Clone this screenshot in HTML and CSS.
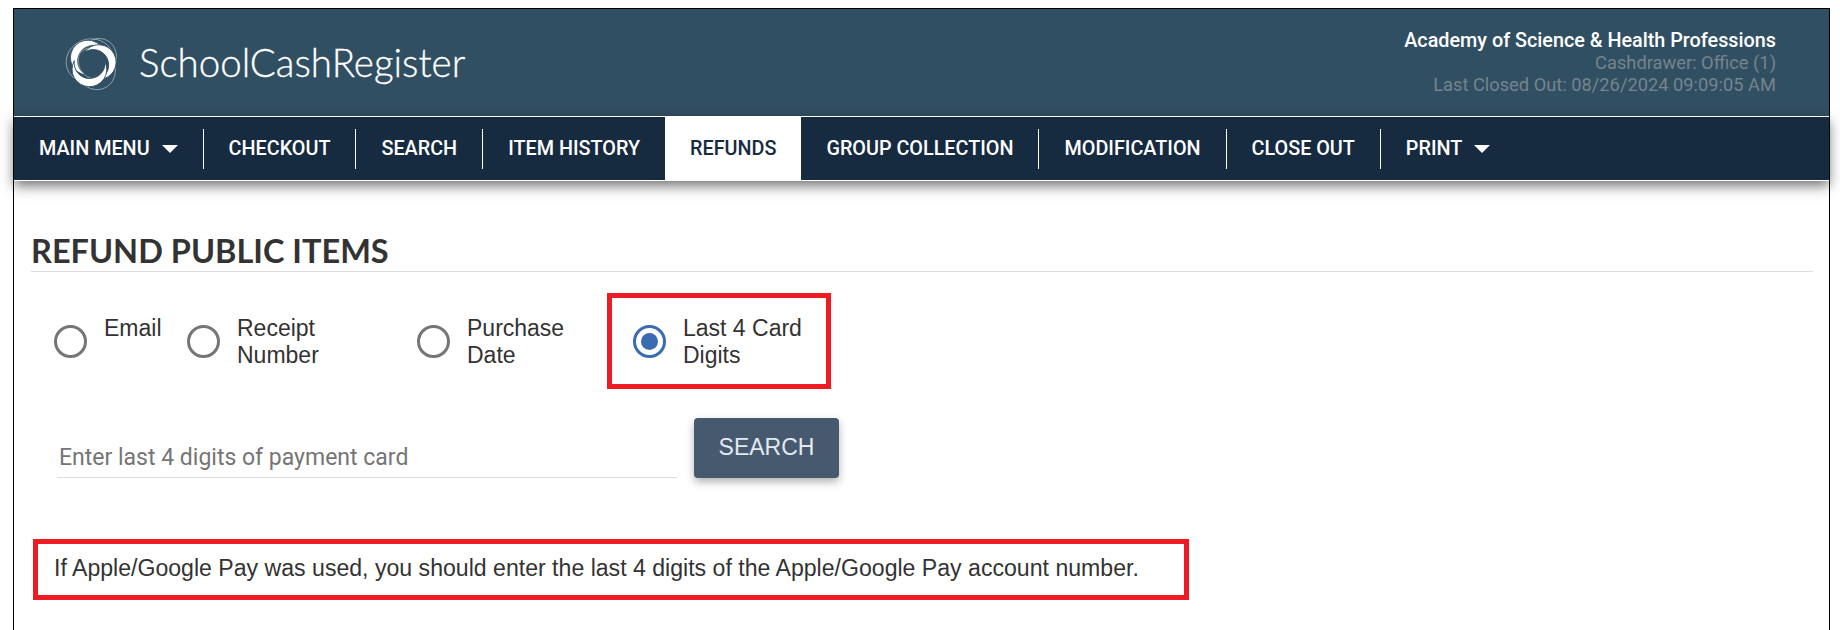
FILE: index.html
```html
<!DOCTYPE html>
<html lang="en">

<head>
  <meta charset="UTF-8">
  <title>School Cash Register - Refunds</title>
  <link rel="stylesheet" href="styles.css">
</head>

<body>
  <div class="frame">
    <header class="top-header">
      <div class="brand">
        <svg class="brand-logo" viewBox="4 4 92 92" width="50" height="50">
          <g fill="none" stroke="#fff" stroke-width="0.9" opacity="0.85">
            <ellipse cx="46" cy="46" rx="44" ry="40" transform="rotate(-20 46 46)"/>
            <ellipse cx="60" cy="42" rx="34" ry="38" transform="rotate(30 60 42)"/>
            <ellipse cx="56" cy="60" rx="40" ry="36" transform="rotate(60 56 60)"/>
          </g>
          <g fill="#fff" stroke="#314f62" stroke-width="1.5">
            <path id="blade" d="M70 24A32 32 0 1 0 40 72A28.500 28.500 0 1 1 70 24Z"/>
            <use href="#blade" transform="rotate(120 50 50)"/>
            <use href="#blade" transform="rotate(240 50 50)"/>
          </g>
        </svg>
        <span class="brand-name">SchoolCashRegister</span>
      </div>
      <div class="school-info">
        <div class="school-name">Academy of Science &amp; Health Professions</div>
        <div class="school-meta">Cashdrawer: Office (1)</div>
        <div class="school-meta">Last Closed Out: 08/26/2024 09:09:05 AM</div>
      </div>
    </header>

    <nav class="main-nav">
      <a class="nav-link" href="#">MAIN MENU <span class="caret"></span></a>
      <span class="nav-sep"></span>
      <a class="nav-link" href="#">CHECKOUT</a>
      <span class="nav-sep"></span>
      <a class="nav-link" href="#">SEARCH</a>
      <span class="nav-sep"></span>
      <a class="nav-link" href="#">ITEM HISTORY</a>
      <a class="nav-link active" href="#">REFUNDS</a>
      <a class="nav-link" href="#">GROUP COLLECTION</a>
      <span class="nav-sep"></span>
      <a class="nav-link" href="#">MODIFICATION</a>
      <span class="nav-sep"></span>
      <a class="nav-link" href="#">CLOSE OUT</a>
      <span class="nav-sep"></span>
      <a class="nav-link" href="#">PRINT <span class="caret"></span></a>
    </nav>

    <main class="content">
      <h1 class="page-title">REFUND PUBLIC ITEMS</h1>

      <form>
        <div class="search-types">
          <label class="search-type type-email">
            <span class="radio"></span>
            <span class="radio-text">Email</span>
          </label>
          <label class="search-type type-receipt">
            <span class="radio"></span>
            <span class="radio-text">Receipt<br>Number</span>
          </label>
          <label class="search-type type-date">
            <span class="radio"></span>
            <span class="radio-text">Purchase<br>Date</span>
          </label>
          <label class="search-type type-card">
            <span class="radio checked"></span>
            <span class="radio-text">Last 4 Card<br>Digits</span>
          </label>
        </div>

        <div class="search-row">
          <input class="search-input" type="text" placeholder="Enter last 4 digits of payment card">
          <button class="search-btn" type="button">SEARCH</button>
        </div>
      </form>

      <p class="note">If Apple/Google Pay was used, you should enter the last 4 digits of the Apple/Google Pay account number.</p>
      <div class="card-box"></div>
    </main>
  </div>
</body>

</html>
```

FILE: styles.css
```css
html,
body {
  height: 100%;
  overflow: hidden;
}

body {
  margin: 0;
  padding: 8px 10px 0 13px;
  background: #fff;
  font-family: "Liberation Sans", Arial, sans-serif;
  color: #333;
}

.frame {
  border: 1px solid #000;
  border-bottom: 0;
  min-height: 640px;
}

.top-header {
  height: 107px;
  background: #314f62;
  display: flex;
  justify-content: space-between;
  padding: 0 53px 0 53px;
}

.brand {
  display: flex;
  align-items: center;
  gap: 22px;
}

.brand-logo {
  overflow: visible;
}

.brand-name {
  font-family: Lato, sans-serif;
  font-weight: 300;
  font-size: 38.5px;
  color: #fff;
  margin-bottom: 2px;
  -webkit-text-stroke: 0.3px #fff;
}

.school-info {
  font-family: Roboto, sans-serif;
  font-size: 18.300px;
  line-height: 22px;
  text-align: right;
  padding-top: 21px;
}

.school-name {
  font-size: 19.800px;
  font-weight: 500;
  color: #fff;
}

.school-meta {
  color: #75848c;
}

.main-nav {
  display: flex;
  align-items: center;
  height: 63px;
  background: #162a40;
  border-top: 1px solid #fff;
  border-bottom: 1px solid #fff;
  box-shadow: 0 5px 12px rgba(0, 0, 0, 0.55);
  font-family: Roboto, sans-serif;
  font-weight: 500;
  font-size: 19.800px;
}

.nav-link {
  display: flex;
  align-items: center;
  height: 100%;
  padding: 0 25px;
  color: #fff;
  text-decoration: none;
}

.nav-link.active {
  background: #fff;
  color: #162a40;
}

.nav-sep {
  width: 1px;
  height: 40px;
  background: #fff;
}

.caret {
  margin-left: 12px;
  border-left: 8px solid transparent;
  border-right: 8px solid transparent;
  border-top: 8px solid #fff;
}

.content {
  position: relative;
  padding: 0 16px 0 17px;
}

.page-title {
  margin: 0;
  padding-top: 50px;
  border-bottom: 1px solid #ddd;
  font-family: Lato, sans-serif;
  font-weight: 700;
  font-size: 32.5px;
  line-height: 40px;
  color: #333;
}

.search-types {
  display: flex;
  margin-top: 42px;
  margin-left: 23px;
}

.search-type {
  display: flex;
  gap: 17px;
  font-size: 23px;
  line-height: 27px;
}

.radio-text {
  padding-top: 1px;
}

.type-email {
  width: 133px;
}

.type-receipt {
  width: 230px;
}

.type-date {
  width: 216px;
}

.radio {
  box-sizing: border-box;
  width: 33px;
  height: 33px;
  margin-top: 11px;
  border: 3px solid #757575;
  border-radius: 50%;
}

.radio.checked {
  border-color: #3a6cb2;
  position: relative;
}

.radio.checked::after {
  content: "";
  position: absolute;
  left: 5px;
  top: 5px;
  width: 17px;
  height: 17px;
  border-radius: 50%;
  background: #3a6cb2;
}

.search-row {
  display: flex;
  align-items: flex-end;
  gap: 17px;
  margin-top: 49px;
  margin-left: 26px;
}

.search-input {
  width: 620px;
  box-sizing: border-box;
  height: 42px;
  padding: 2px 2px 0;
  border: 0;
  border-bottom: 1px solid #ddd;
  font-family: Roboto, sans-serif;
  font-size: 23px;
  color: #333;
  outline: none;
}

.search-input::placeholder {
  color: #757575;
}

.search-btn {
  width: 145px;
  height: 60px;
  padding-bottom: 3px;
  border: 0;
  border-radius: 4px;
  background: #46596f;
  color: #e3e9f0;
  font-family: "Liberation Sans", Arial, sans-serif;
  font-size: 23px;
  box-shadow: 0 4px 8px rgba(0, 0, 0, 0.3);
}

.note {
  box-sizing: border-box;
  width: 1156px;
  height: 61px;
  margin: 61px 0 0 2px;
  padding: 0 16px;
  border: 5px solid #ed1c24;
  font-size: 23.100px;
  line-height: 49px;
}

/* red callout drawn over the selected radio */
.card-box {
  position: absolute;
  left: 593px;
  top: 112px;
  width: 224px;
  height: 96px;
  box-sizing: border-box;
  border: 5px solid #ed1c24;
}
```
